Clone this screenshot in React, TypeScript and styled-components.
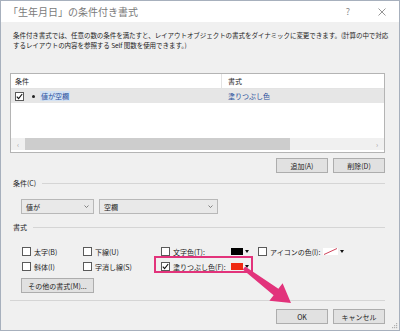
import React from "react";
import styled, { createGlobalStyle } from "styled-components";

const Pink = "#e2337b";

const GlobalStyle = createGlobalStyle`
  html, body { margin: 0; padding: 0; background: #fff; }
  body { font-family: "Noto Sans CJK JP", "Noto Sans", sans-serif; color: #222; }
`;

const Window = styled.div`
  position: relative;
  width: 400px;
  height: 331px;
  box-sizing: border-box;
  border: 1px solid #a7b0bd;
  background: #f0f0f0;
  display: flex;
  flex-direction: column;
  overflow: hidden;
`;

const TitleBar = styled.div`
  height: 21px;
  background: #fff;
  display: flex;
  align-items: center;
  padding-left: 7px;
`;

const Title = styled.span`
  font-size: 10px;
  color: #7a7a7a;
  flex: 1;
`;

const TitleIcon = styled.span`
  width: 34px;
  display: flex;
  justify-content: center;
  font-size: 9px;
  color: #8a8a8a;
`;

const Body = styled.div`
  padding: 0 14px 0 9px;
  display: flex;
  flex-direction: column;
`;

const Description = styled.div`
  margin-top: 8px;
  padding-left: 3px;
  font-size: 6.5px;
  line-height: 10px;
  white-space: nowrap;
  letter-spacing: -0.05px;
`;

const ListBox = styled.div`
  margin-top: 23px;
  height: 80px;
  box-sizing: border-box;
  border: 1px solid #b4b4b4;
  background: #fff;
  display: flex;
  flex-direction: column;
`;

const ListRow = styled.div<{ $head?: boolean }>`
  display: grid;
  grid-template-columns: 211px 1fr;
  height: ${(p) => (p.$head ? 15 : 14)}px;
  box-sizing: border-box;
  align-items: center;
  font-size: 7px;
  background: ${(p) => (p.$head ? "#fff" : "#e6e6e6")};
  border-bottom: ${(p) => (p.$head ? "1px solid #e3e3e3" : "none")};
`;

const ListCell = styled.div<{ $first?: boolean; $head?: boolean }>`
  height: 100%;
  display: flex;
  align-items: center;
  gap: 4px;
  padding-left: ${(p) => (p.$first ? 4 : 6)}px;
  border-right: ${(p) => (p.$first && p.$head ? "1px solid #e3e3e3" : "none")};
  color: ${(p) => (p.$head ? "#222" : "#2a4f9c")};
`;

const Bullet = styled.span`
  width: 3px;
  height: 3px;
  border-radius: 50%;
  background: #222;
  margin: 0 1px;
`;

const Selected = styled.span`
  background: #d3e2f4;
  padding: 0 1px;
`;

const ScrollBar = styled.div`
  margin-top: auto;
  margin-bottom: 2px;
  height: 12px;
  display: flex;
  align-items: stretch;
  background: #f0f0f0;
  font-size: 7px;
  color: #a0a0a0;
`;

const ScrollArrow = styled.div`
  width: 14px;
  display: flex;
  align-items: center;
  justify-content: center;
`;

const ScrollThumb = styled.div`
  width: 265px;
  background: #cdcdcd;
`;

const ScrollTrack = styled.div`
  flex: 1;
`;

const ButtonRow = styled.div<{ $top: number; $start?: boolean }>`
  margin-top: ${(p) => p.$top}px;
  display: flex;
  justify-content: ${(p) => (p.$start ? "flex-start" : "flex-end")};
  padding-left: ${(p) => (p.$start ? 11 : 0)}px;
  gap: 5px;
`;

const Button = styled.button<{ $w?: number }>`
  width: ${(p) => p.$w ?? 52}px;
  height: 15px;
  padding: 0;
  box-sizing: border-box;
  border: 1px solid #adadad;
  background: #e1e1e1;
  font-family: inherit;
  font-size: 7px;
  color: #222;
  display: flex;
  align-items: center;
  justify-content: center;
`;

const GroupLabel = styled.div<{ $top: number }>`
  margin-top: ${(p) => p.$top}px;
  height: 10px;
  display: flex;
  align-items: center;
  gap: 6px;
  padding-left: 3px;
  font-size: 7px;
  &::after {
    content: "";
    flex: 1;
    height: 1px;
    background: #d5d5d5;
  }
`;

const ComboRow = styled.div`
  margin-top: 11px;
  padding-left: 11px;
  display: flex;
  gap: 5px;
`;

const Combo = styled.div<{ $w: number }>`
  width: ${(p) => p.$w}px;
  height: 15px;
  box-sizing: border-box;
  border: 1px solid #b8b8b8;
  background: #e9e9e9;
  display: flex;
  align-items: center;
  justify-content: space-between;
  padding: 0 4px;
  font-size: 7px;
`;

const FormatGrid = styled.div`
  margin-top: 14px;
  padding-left: 12px;
  display: grid;
  grid-template-columns: 61px 78px 97px 1fr;
  row-gap: 4px;
`;

const CheckItem = styled.label<{ $highlight?: boolean }>`
  position: relative;
  height: 11px;
  display: flex;
  align-items: center;
  font-size: 7px;
  white-space: nowrap;
  ${(p) =>
    p.$highlight &&
    `&::after {
      content: "";
      position: absolute;
      left: -7px;
      top: -5px;
      width: 95px;
      height: 13px;
      border: 2px solid ${Pink};
    }`}
`;

const Box = styled.span`
  width: 9px;
  height: 9px;
  box-sizing: border-box;
  border: 1px solid #5a5a5a;
  background: #fff;
  margin-right: 3px;
  display: flex;
  align-items: center;
  justify-content: center;
  flex-shrink: 0;
`;

const LabelText = styled.span<{ $w?: number }>`
  width: ${(p) => (p.$w ? `${p.$w}px` : "auto")};
`;

const Swatch = styled.span<{ $color: string }>`
  width: 12px;
  height: 7px;
  background: ${(p) => p.$color};
`;

const DropTri = styled.span`
  width: 0;
  height: 0;
  margin-left: 2px;
  border-left: 2.5px solid transparent;
  border-right: 2.5px solid transparent;
  border-top: 3px solid #111;
`;

const Separator = styled.div`
  margin-top: 7px;
  height: 1px;
  background: #d5d5d5;
`;

const Overlay = styled.svg`
  position: absolute;
  left: -1px;
  top: -1px;
  pointer-events: none;
`;

const Grip = styled.svg`
  position: absolute;
  right: 1px;
  bottom: 1px;
`;

function Check() {
  return (
    <svg width="7" height="7" viewBox="0 0 7 7">
      <polyline points="0.8,3.6 2.6,5.6 6.2,1" fill="none" stroke="#111" strokeWidth="1.1" />
    </svg>
  );
}

function Chevron() {
  return (
    <svg width="5" height="3" viewBox="0 0 5 3">
      <polyline points="0.5,0.5 2.5,2.5 4.5,0.5" fill="none" stroke="#666" strokeWidth="0.8" />
    </svg>
  );
}

function CheckBox({ checked }: { checked?: boolean }) {
  return <Box>{checked && <Check />}</Box>;
}

export default function App() {
  return (
    <>
      <GlobalStyle />
      <Window>
        <TitleBar>
          <Title>「生年月日」の条件付き書式</Title>
          <TitleIcon>?</TitleIcon>
          <TitleIcon>
            <svg width="8" height="8" viewBox="0 0 8 8">
              <path d="M0.5 0.5 L7.5 7.5 M7.5 0.5 L0.5 7.5" stroke="#8a8a8a" strokeWidth="0.9" />
            </svg>
          </TitleIcon>
        </TitleBar>
        <Body>
          <Description>
            <div>
              条件付き書式では、任意の数の条件を満たすと、レイアウトオブジェクトの書式をダイナミックに変更できます。(計算の中で対応
            </div>
            <div>するレイアウトの内容を参照する Self 関数を使用できます。)</div>
          </Description>
          <ListBox>
            <ListRow $head>
              <ListCell $first $head>
                条件
              </ListCell>
              <ListCell $head>書式</ListCell>
            </ListRow>
            <ListRow>
              <ListCell $first>
                <CheckBox checked />
                <Bullet />
                <Selected>値が空欄</Selected>
              </ListCell>
              <ListCell>塗りつぶし色</ListCell>
            </ListRow>
            <ScrollBar>
              <ScrollArrow>&lsaquo;</ScrollArrow>
              <ScrollThumb />
              <ScrollTrack />
              <ScrollArrow>&rsaquo;</ScrollArrow>
            </ScrollBar>
          </ListBox>
          <ButtonRow $top={5}>
            <Button>追加(A)</Button>
            <Button>削除(D)</Button>
          </ButtonRow>
          <GroupLabel $top={5}>条件(C)</GroupLabel>
          <ComboRow>
            <Combo $w={73}>
              値が
              <Chevron />
            </Combo>
            <Combo $w={119}>
              空欄
              <Chevron />
            </Combo>
          </ComboRow>
          <GroupLabel $top={8}>書式</GroupLabel>
          <FormatGrid>
            <CheckItem>
              <CheckBox />
              太字(B)
            </CheckItem>
            <CheckItem>
              <CheckBox />
              下線(U)
            </CheckItem>
            <CheckItem>
              <CheckBox />
              <LabelText $w={58}>文字色(T):</LabelText>
              <Swatch $color="#000" />
              <DropTri />
            </CheckItem>
            <CheckItem>
              <CheckBox />
              <LabelText $w={53}>アイコンの色(I):</LabelText>
              <svg width="15" height="7" viewBox="0 0 15 7">
                <rect width="15" height="7" fill="#fff" />
                <line x1="1" y1="6.5" x2="14" y2="0.5" stroke="#c9304a" strokeWidth="0.9" />
              </svg>
              <DropTri />
            </CheckItem>
            <CheckItem>
              <CheckBox />
              斜体(I)
            </CheckItem>
            <CheckItem>
              <CheckBox />
              字消し線(S)
            </CheckItem>
            <CheckItem $highlight>
              <CheckBox checked />
              <LabelText $w={58}>塗りつぶし色(F):</LabelText>
              <Swatch $color="#ef2a12" />
              <DropTri />
            </CheckItem>
          </FormatGrid>
          <ButtonRow $top={6} $start>
            <Button $w={73}>その他の書式(M)...</Button>
          </ButtonRow>
          <Separator />
          <ButtonRow $top={8}>
            <Button>OK</Button>
            <Button>キャンセル</Button>
          </ButtonRow>
        </Body>
        <Overlay width="400" height="331" viewBox="0 0 400 331">
          <polygon
            points="242.8,269.6 245.2,266.4 278.4,288.8 282.6,283.2 291,303 269.4,300.8 273.6,295.2"
            fill={Pink}
          />
        </Overlay>
        <Grip width="6" height="6" viewBox="0 0 6 6">
          <rect x="4" y="0" width="1.2" height="1.2" fill="#b0b0b0" />
          <rect x="2" y="2" width="1.2" height="1.2" fill="#b0b0b0" />
          <rect x="4" y="2" width="1.2" height="1.2" fill="#b0b0b0" />
          <rect x="0" y="4" width="1.2" height="1.2" fill="#b0b0b0" />
          <rect x="2" y="4" width="1.2" height="1.2" fill="#b0b0b0" />
          <rect x="4" y="4" width="1.2" height="1.2" fill="#b0b0b0" />
        </Grip>
      </Window>
    </>
  );
}
